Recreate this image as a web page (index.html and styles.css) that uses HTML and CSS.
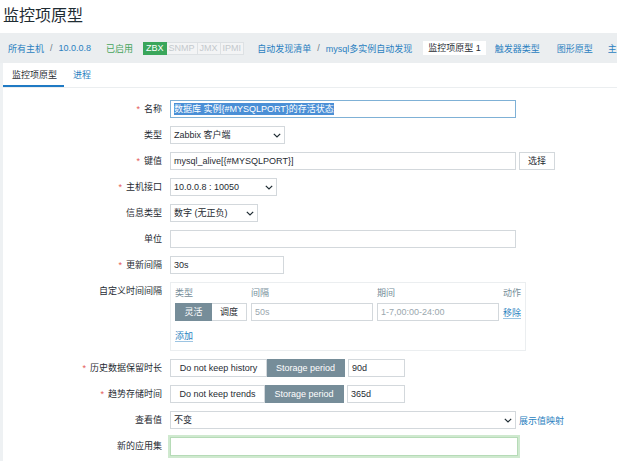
FILE: index.html
```html
<!DOCTYPE html>
<html lang="zh-CN">
<head>
<meta charset="utf-8">
<title>监控项原型</title>
<link rel="stylesheet" href="styles.css">
</head>
<body>
<div class="page">
  <header class="title-bar"><h1>监控项原型</h1></header>

  <nav class="crumbs">
    <a class="lnk">所有主机</a><span class="sep">/</span><a class="lnk">10.0.0.8</a>
    <span class="status">已启用</span>
    <span class="badges"><span class="badge on">ZBX</span><span class="badge">SNMP</span><span class="badge">JMX</span><span class="badge">IPMI</span></span>
    <a class="lnk m13">自动发现清单</a><span class="sep">/</span><a class="lnk">mysql多实例自动发现</a>
    <span class="cur">监控项原型 1</span>
    <a class="lnk m9">触发器类型</a>
    <a class="lnk m17">图形原型</a>
    <a class="lnk m15 last">主机原型</a>
  </nav>

  <main class="main">
    <div class="panel">
      <div class="tabs">
        <a class="tab active">监控项原型</a>
        <a class="tab">进程</a>
      </div>

      <div class="form">
        <div class="lbl"><span class="req">*</span>名称</div>
        <div class="field"><div class="input w346 focus"><span class="hl">数据库 实例{#MYSQLPORT}的存活状态</span></div></div>

        <div class="lbl">类型</div>
        <div class="field"><div class="input select w115"><span>Zabbix 客户端</span><svg class="chev" width="8" height="5" viewBox="0 0 8 5"><path d="M0.8 0.8L4 4 7.2 0.8" fill="none" stroke="#1f2c33" stroke-width="1.2"/></svg></div></div>

        <div class="lbl"><span class="req">*</span>键值</div>
        <div class="field"><div class="input w346">mysql_alive[{#MYSQLPORT}]</div><span class="btn">选择</span></div>

        <div class="lbl"><span class="req">*</span>主机接口</div>
        <div class="field"><div class="input select w107"><span>10.0.0.8 : 10050</span><svg class="chev" width="8" height="5" viewBox="0 0 8 5"><path d="M0.8 0.8L4 4 7.2 0.8" fill="none" stroke="#1f2c33" stroke-width="1.2"/></svg></div></div>

        <div class="lbl">信息类型</div>
        <div class="field"><div class="input select w88"><span>数字 (无正负)</span><svg class="chev" width="8" height="5" viewBox="0 0 8 5"><path d="M0.8 0.8L4 4 7.2 0.8" fill="none" stroke="#1f2c33" stroke-width="1.2"/></svg></div></div>

        <div class="lbl">单位</div>
        <div class="field"><div class="input w346"></div></div>

        <div class="lbl"><span class="req">*</span>更新间隔</div>
        <div class="field"><div class="input w114">30s</div></div>

        <div class="lbl">自定义时间间隔</div>
        <div class="field">
          <div class="intervals">
            <div class="igrid">
              <div class="ih">类型</div><div class="ih">间隔</div><div class="ih">期间</div><div class="ih">动作</div>
              <div class="seg"><span class="sb on w37">灵活</span><span class="sb w35">调度</span></div>
              <div class="input muted">50s</div>
              <div class="input muted">1-7,00:00-24:00</div>
              <a class="link">移除</a>
            </div>
            <a class="link add">添加</a>
          </div>
        </div>

        <div class="lbl"><span class="req">*</span>历史数据保留时长</div>
        <div class="field">
          <div class="seg"><span class="sb w97">Do not keep history</span><span class="sb on w78">Storage period</span></div>
          <div class="input w57">90d</div>
        </div>

        <div class="lbl"><span class="req">*</span>趋势存储时间</div>
        <div class="field">
          <div class="seg"><span class="sb w95">Do not keep trends</span><span class="sb on w79">Storage period</span></div>
          <div class="input w58">365d</div>
        </div>

        <div class="lbl">查看值</div>
        <div class="field"><div class="input select w346"><span>不变</span><svg class="chev" width="8" height="5" viewBox="0 0 8 5"><path d="M0.8 0.8L4 4 7.2 0.8" fill="none" stroke="#1f2c33" stroke-width="1.2"/></svg></div><a class="link plain">展示值映射</a></div>

        <div class="lbl">新的应用集</div>
        <div class="field"><div class="input w348 green"></div></div>
      </div>
    </div>
  </main>
</div>
</body>
</html>
```

FILE: styles.css
```css
* { box-sizing: border-box; }

html, body {
  margin: 0;
  padding: 0;
  height: 461px;
  overflow: hidden;
  background: #ffffff;
}

body {
  font-family: "Liberation Sans", "Noto Sans CJK SC", sans-serif;
  font-size: 9px;
  color: #1f2c33;
}

.page {
  width: 617px;
  overflow: hidden;
}

/* Title */
.title-bar {
  height: 33px;
  display: flex;
  align-items: center;
  padding-left: 3px;
  background: #ffffff;
}
.title-bar h1 {
  margin: 0;
  font-size: 16px;
  font-weight: normal;
  line-height: 20px;
  color: #1f2c33;
  margin-top: -2px;
}

/* Breadcrumbs */
.crumbs {
  height: 30px;
  background: #ebeef0;
  display: flex;
  align-items: center;
  padding-left: 8px;
  white-space: nowrap;
  overflow: hidden;
}
.lnk { color: #2a7fc0; }
.sep { color: #6b7b84; margin: 0 6px; }
.status { color: #46a45c; margin-left: 15px; }
.badges { display: flex; margin-left: 10px; }
.badge {
  height: 13px;
  line-height: 11px;
  padding: 0 2px;
  border: 1px solid #dde1e4;
  border-left-width: 0;
  background: #f3f4f5;
  color: #c3c9cd;
}
.badge.on {
  background: #3aa65b;
  border-color: #3aa65b;
  border-left-width: 1px;
  color: #ffffff;
}
.m13 { margin-left: 13px; }
.m9 { margin-left: 9px; }
.m17 { margin-left: 17px; }
.m15 { margin-left: 15px; }
.last { flex: 0 1 auto; min-width: 0; overflow: hidden; }
.cur {
  margin-left: 11px;
  background: #ffffff;
  height: 14px;
  line-height: 14px;
  padding: 0 5px;
  color: #1f2c33;
}

/* Main */
.main {
  background: #eef1f3;
  padding-left: 3px;
}
.panel {
  background: #ffffff;
  height: 398px;
}

.tabs {
  height: 25px;
  display: flex;
  border-bottom: 1px solid #ebeef0;
}
.tab {
  display: flex;
  align-items: center;
  padding: 0 7px 0 9px;
  color: #2a7fc0;
  border-bottom: 2px solid transparent;
  padding-top: 1px;
}
.tab.active {
  color: #1f2c33;
  border-bottom-color: #1f7ac4;
}

/* Form */
.form {
  display: grid;
  grid-template-columns: 159px 1fr;
  column-gap: 8px;
  row-gap: 8px;
  padding-top: 12px;
}
.lbl {
  text-align: right;
  line-height: 18px;
  white-space: nowrap;
}
.req {
  color: #e45959;
  margin-right: 4px;
}
.field {
  display: flex;
  align-items: center;
  gap: 3px;
}

.input {
  height: 18px;
  border: 1px solid #d3d8dc;
  background: #ffffff;
  padding: 0 3px;
  line-height: 16px;
  white-space: nowrap;
  overflow: hidden;
  color: #1f2c33;
}
.input.focus { border-color: #7fb1d6; }
.hl {
  background: #4a8fd6;
  color: #ffffff;
  padding: 1px 0;
}
.input.select {
  display: flex;
  align-items: center;
  justify-content: space-between;
  padding-right: 3px;
}
.chev { flex: none; }
.input.muted { color: #9aa7ae; }
.input.green {
  border-color: #b6dbb7;
  box-shadow: 0 0 0 2px #cfe9cf;
  height: 19px;
}

.w346 { width: 346px; }
.w348 { width: 348px; }
.w115 { width: 115px; }
.w114 { width: 114px; }
.w107 { width: 107px; }
.w88 { width: 88px; }
.w57 { width: 57px; }
.w58 { width: 58px; }

.btn {
  height: 18px;
  width: 36px;
  border: 1px solid #d3d8dc;
  background: #ffffff;
  text-align: center;
  line-height: 16px;
  color: #1f2c33;
}

.link {
  color: #2a7fc0;
  text-decoration: underline;
  text-decoration-color: #9cc4e2;
  text-underline-offset: 2px;
}
.link.plain { text-decoration: none; }

/* Segmented buttons */
.seg {
  display: flex;
  height: 18px;
}
.sb {
  height: 18px;
  line-height: 16px;
  border: 1px solid #d3d8dc;
  background: #ffffff;
  padding: 0 8px;
  white-space: nowrap;
  text-align: center;
}
.sb + .sb { border-left-width: 0; }
.sb.on {
  background: #768d99;
  border-color: #768d99;
  color: #ffffff;
}
.w37 { width: 37px; padding: 0; }
.w35 { width: 35px; padding: 0; }
.w97 { width: 97px; padding: 0; }
.w78 { width: 78px; padding: 0; }
.w95 { width: 95px; padding: 0; }
.w79 { width: 79px; padding: 0; }

/* Custom intervals box */
.intervals {
  width: 356px;
  border: 1px solid #ebeef0;
  padding: 4px 4px 8px 4px;
}
.igrid {
  display: grid;
  grid-template-columns: 72px 122px 122px auto;
  column-gap: 4px;
  row-gap: 4px;
  align-items: center;
}
.ih {
  color: #768d99;
  line-height: 12px;
}
.add {
  display: inline-block;
  margin-top: 9px;
  line-height: 12px;
}
```
